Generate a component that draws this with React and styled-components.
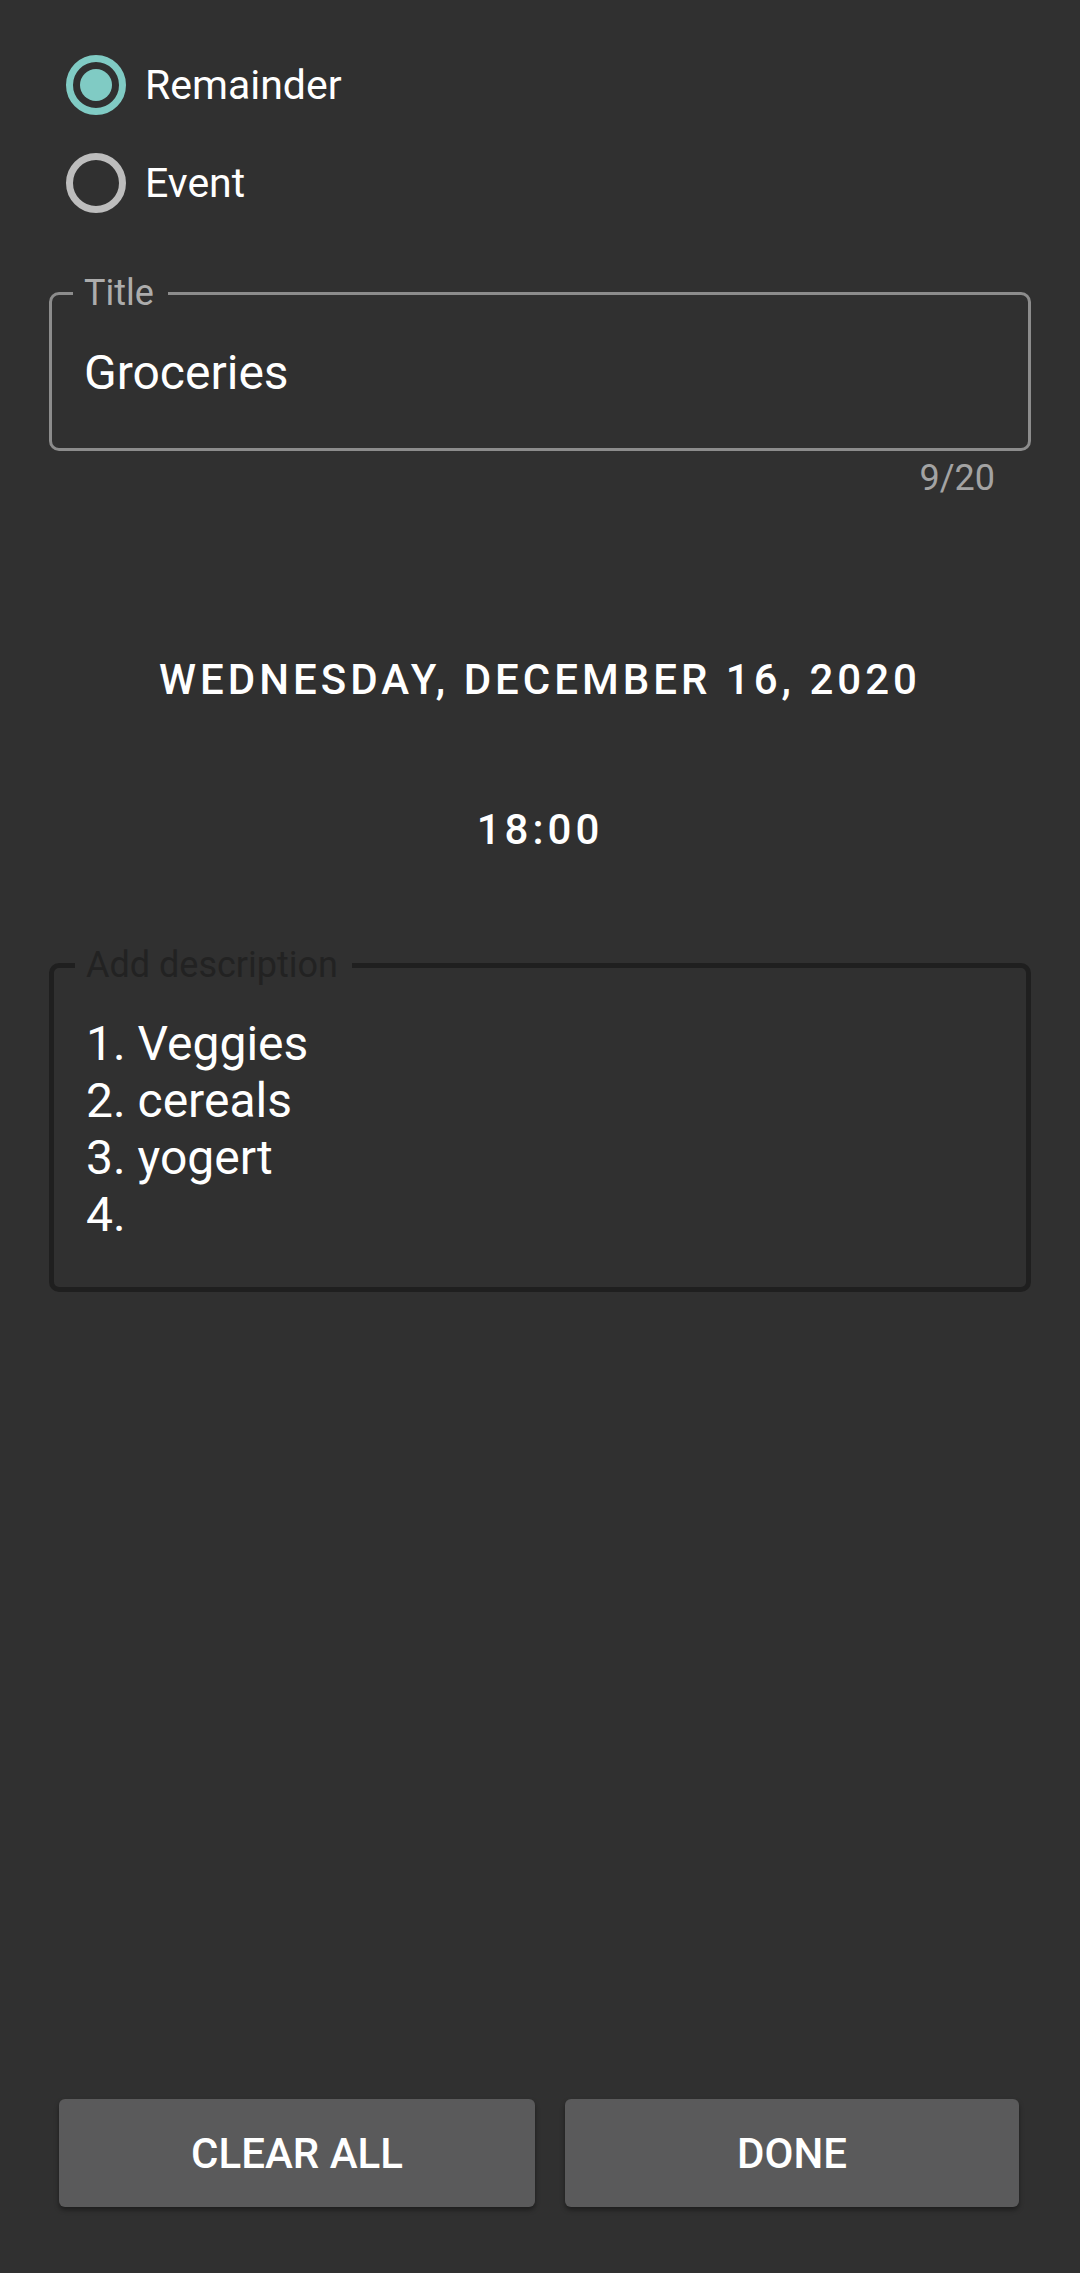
import styled, { createGlobalStyle } from "styled-components";

const GlobalStyle = createGlobalStyle`
    html, body {
        margin: 0;
        padding: 0;
        background: #303030;
    }
    * {
        box-sizing: border-box;
    }
`;

const options = [
    { id: 'remainder', label: 'Remainder', selected: true },
    { id: 'event', label: 'Event', selected: false },
];

const descLines = ['1. Veggies', '2. cereals', '3. yogert', '4.'];

export default function App() {
    return (
        <>
            <GlobalStyle />
            <Screen>
                <RadioGroup>
                    {options.map(opt => (
                        <RadioRow key={opt.id}>
                            <RadioCircle $selected={opt.selected}>
                                {opt.selected && <RadioDot />}
                            </RadioCircle>
                            <RadioLabel>{opt.label}</RadioLabel>
                        </RadioRow>
                    ))}
                </RadioGroup>

                <Outline $color="#8c8c8c" $width={3} $top={43}>
                    <Legend $color="#acacac">Title</Legend>
                    <InputText>Groceries</InputText>
                </Outline>
                <Counter>9/20</Counter>

                <PickerText $top={157}>WEDNESDAY, DECEMBER 16, 2020</PickerText>
                <PickerText $top={100}>18:00</PickerText>

                <Outline $color="#1f1f1f" $width={5} $top={92} $desc>
                    <Legend $color="#222222">Add description</Legend>
                    {descLines.map(line => <DescLine key={line}>{line}</DescLine>)}
                </Outline>

                <ButtonRow>
                    <ActionButton $grow={476}>CLEAR ALL</ActionButton>
                    <ActionButton $grow={454}>DONE</ActionButton>
                </ButtonRow>
            </Screen>
        </>
    )
}

const Screen = styled.div`
    min-height: 2273px;
    background: #303030;
    display: flex;
    flex-direction: column;
    font-family: Roboto, 'Noto Sans', sans-serif;
    color: #ffffff;
    padding-top: 36px;
    padding-bottom: 66px;
`;

const RadioGroup = styled.div`
    display: flex;
    flex-direction: column;
`;

const RadioRow = styled.div`
    display: flex;
    align-items: center;
    height: 98px;
    padding-left: 66px;
    gap: 19px;
`;

const RadioCircle = styled.div`
    width: 60px;
    height: 60px;
    border-radius: 50%;
    border: 7px solid ${p => p.$selected ? '#80cbc4' : '#bdbdbd'};
    display: flex;
    align-items: center;
    justify-content: center;
`;

const RadioDot = styled.div`
    width: 32px;
    height: 32px;
    border-radius: 50%;
    background: #80cbc4;
`;

const RadioLabel = styled.span`
    font-size: 41px;
    line-height: 50px;
`;

const Outline = styled.fieldset`
    margin: ${p => p.$top}px 49px 0;
    border: ${p => p.$width}px solid ${p => p.$color};
    border-radius: 10px;
    padding: ${p => p.$desc ? '32px 32px 44px' : '34px 32px 47px'};
    min-width: 0;
`;

const Legend = styled.legend`
    font-size: 36px;
    line-height: 36px;
    color: ${p => p.$color};
    padding: 0 14px 0 11px;
    margin-left: -11px;
`;

const InputText = styled.div`
    font-size: 48px;
    line-height: 56px;
`;

const DescLine = styled.div`
    font-size: 48px;
    line-height: 57px;
    height: 57px;
`;

const Counter = styled.div`
    align-self: flex-end;
    margin: 7px 85px 0 0;
    font-size: 36px;
    line-height: 40px;
    color: #a3a3a3;
`;

const PickerText = styled.div`
    margin-top: ${p => p.$top}px;
    text-align: center;
    font-size: 42px;
    line-height: 50px;
    font-weight: 500;
    letter-spacing: 4px;
`;

const ButtonRow = styled.div`
    margin-top: auto;
    display: flex;
    gap: 30px;
    padding: 0 61px 0 59px;
`;

const ActionButton = styled.button`
    flex: ${p => p.$grow} 1 0;
    height: 108px;
    border: none;
    border-radius: 6px;
    background: #5a5a5b;
    box-shadow: 0 3px 5px rgba(0, 0, 0, 0.4);
    color: #ffffff;
    font-family: Roboto, 'Noto Sans', sans-serif;
    font-size: 42px;
    font-weight: 500;
    padding: 0;
`;
